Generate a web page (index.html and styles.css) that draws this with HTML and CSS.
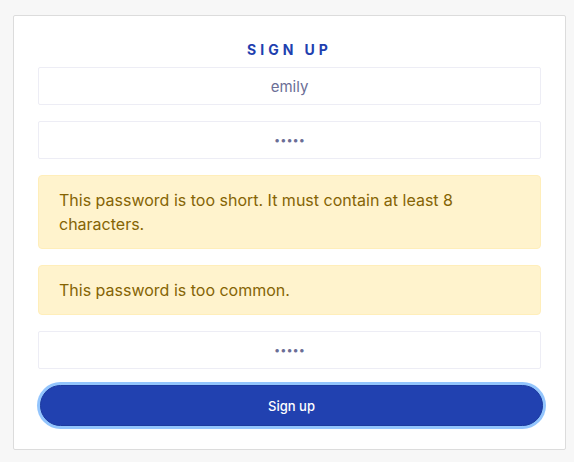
FILE: index.html
```html
<!DOCTYPE html>
<html lang="en">
<head>
<meta charset="utf-8">
<title>Sign up</title>
<link rel="stylesheet" href="styles.css">
</head>
<body>
<main class="card">
  <h1 class="title">SIGN UP</h1>
  <form class="form">
    <input class="field" type="text" value="emily" readonly>
    <input class="field field-secret" type="password" value="12345" readonly>
    <div class="alert">This password is too short. It must contain at least 8 characters.</div>
    <div class="alert">This password is too common.</div>
    <input class="field field-secret" type="password" value="12345" readonly>
    <button class="btn" type="button">Sign up</button>
  </form>
</main>
</body>
</html>
```
FILE: styles.css
```css
html, body {
  margin: 0;
  background: #f7f7f7;
}
body {
  padding: 15px 8px 12px 13px;
  font-family: "Inter", "Noto Sans", sans-serif;
}
.card {
  box-sizing: border-box;
  width: 553px;
  background: #ffffff;
  border: 1px solid #dcdcdc;
  border-radius: 2px;
  padding: 24px 24px 23px 24px;
}
.title {
  margin: 0 0 7px 0;
  text-align: center;
  font-size: 14px;
  line-height: 20px;
  font-weight: 700;
  letter-spacing: 4px;
  color: #1e40af;
}
.form {
  display: flex;
  flex-direction: column;
  gap: 16px;
}
.field {
  box-sizing: border-box;
  width: 100%;
  height: 38px;
  margin: 0;
  border: 1px solid #ededf5;
  border-radius: 2px;
  background: #ffffff;
  text-align: center;
  font-family: inherit;
  font-size: 15px;
  color: #6b6e96;
  outline: none;
}
.field-secret {
  font-size: 11px;
}
.alert {
  border: 1px solid #ffeeba;
  background: #fff3cd;
  color: #856404;
  border-radius: 4px;
  padding: 12px 20px;
  font-size: 16px;
  line-height: 24px;
}
.btn {
  box-sizing: border-box;
  width: 503px;
  height: 41px;
  margin: 0 0 0 2px;
  border: 1px solid #1c3a9e;
  border-radius: 21px;
  background: #2141b0;
  color: #ffffff;
  font-family: inherit;
  font-size: 13px;
  font-weight: 500;
  box-shadow: 0 0 0 3px #93c5fd;
}
```
